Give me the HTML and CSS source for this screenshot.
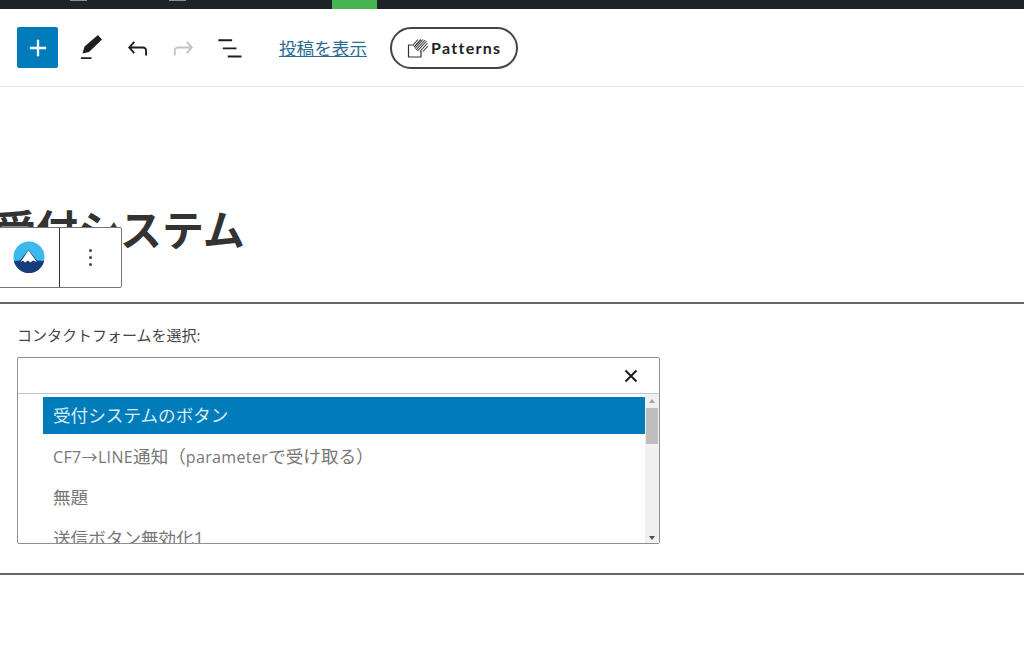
FILE: index.html
```html
<!DOCTYPE html>
<html lang="ja">
<head>
<meta charset="utf-8">
<title>受付システム</title>
<link rel="stylesheet" href="styles.css">
</head>
<body>
<div class="adminbar">
  <span class="mark mark-a"></span>
  <span class="mark mark-b"></span>
  <span class="green"></span>
</div>
<header class="toolbar">
  <button class="add" aria-label="add"><svg width="28" height="28" viewBox="0 0 24 24"><path d="M11 5h2v6h6v2h-6v6h-2v-6H5v-2h6z" fill="#fff"/></svg></button>
  <svg class="tool pen" width="30" height="30" viewBox="0 0 24 24"><path d="M4 19.300h8.400v1.500H4z M5.200 16.400 6.800 10.800 17.600 1.600 20.800 5.200 10.400 15.200z" fill="#1e1e1e"/></svg>
  <svg class="tool undo" width="30" height="30" viewBox="0 0 24 24"><path d="M18.300 11.700c-.6-.6-1.400-.9-2.300-.9H6.700l2.900-3.300-1.100-1-4.500 5L8.500 16.500l1.100-1-2.900-3.200H16c.5 0 .9.2 1.200.5.3.3.5.7.500 1.200v4h1.500v-4c0-.9-.4-1.700-.9-2.300z" fill="#1e1e1e"/></svg>
  <svg class="tool redo" width="30" height="30" viewBox="0 0 24 24"><path d="M15.600 6.500l-1.100 1 2.900 3.300H8c-.9 0-1.700.3-2.300.9-.6.6-1 1.400-1 2.300v4h1.500v-4c0-.5.2-.9.5-1.200.3-.3.7-.5 1.200-.5h9.200L14.500 15.500l1.100 1 4.500-5z" fill="#c4c4c4"/></svg>
  <svg class="tool list" width="30" height="30" viewBox="0 0 24 24"><path d="M3.500 5h11v1.500h-11zM7 11.500h11V13H7zM11 18h11v1.500H11z" fill="#1e1e1e"/></svg>
  <a class="view" href="#">投稿を表示</a>
  <div class="patterns">
    <svg width="24" height="24" viewBox="0 0 24 24"><path d="M8 9H2.500V21H15V15" fill="none" stroke="#333" stroke-width="1.200"/><path d="M7.500 8.500 12 3.500M8 11 15 3.500M9 12.500 17 3.500M10 14 19 4M11.500 15 20.500 5M14 15.500 21.500 7M17 15.500 22 10" stroke="#333" stroke-width="1.100" fill="none"/></svg>
    <span>Patterns</span>
  </div>
</header>
<main class="content">
  <h1 class="title">受付システム</h1>
  <div class="blocktools">
    <div class="bt-icon">
      <svg width="32" height="32" viewBox="0 0 32 32">
        <circle cx="16" cy="16" r="15.500" fill="#3bb9ef"/>
        <path d="M.9 20 7 19.500 15.500 9 24 19.500 31.100 20A15.500 15.500 0 0 1 .9 20z" fill="#173c7c"/>
        <path d="M15.500 9.500 24 21 20 19.500 17.500 21.500 15 19.500 12 21.500 10 19.500 7.500 21z" fill="#fff"/>
      </svg>
    </div>
    <div class="bt-more"><i></i><i></i><i></i></div>
  </div>
  <section class="block">
    <label class="label">コンタクトフォームを選択:</label>
    <div class="combo">
      <div class="combo-input"><svg width="24" height="24" viewBox="0 0 24 24"><path d="M6.500 6.500l11 11M17.500 6.500l-11 11" stroke="#1e1e1e" stroke-width="2" fill="none"/></svg></div>
      <div class="combo-body">
        <ul class="options">
          <li class="selected">受付システムのボタン</li>
          <li><span class="latin">CF7→LINE</span>通知（<span class="latin">parameter</span>で受け取る）</li>
          <li>無題</li>
          <li>送信ボタン無効化1</li>
        </ul>
        <div class="scrollbar">
          <span class="arrow up"></span>
          <span class="thumb"></span>
          <span class="arrow down"></span>
        </div>
      </div>
    </div>
  </section>
</main>
</body>
</html>
```
FILE: styles.css
```css
* { box-sizing: border-box; }
html, body { margin: 0; padding: 0; height: 100%; overflow: hidden; background: #fff; }
body { font-family: "Open Sans", "Noto Sans CJK JP", sans-serif; color: #1e1e1e; }

.adminbar { position: relative; height: 9px; background: #1d2327; }
.green { position: absolute; left: 332px; top: 0; width: 45px; height: 9px; background: #46b450; }
.mark { position: absolute; top: 0; height: 1px; width: 17px; background: #8c8f94; }
.mark-a { left: 70px; }
.mark-b { left: 169px; }

.toolbar { display: flex; align-items: center; height: 78px; padding-left: 17px; border-bottom: 1px solid #e8e8e8; }
.add { display: flex; align-items: center; justify-content: center; width: 41px; height: 41px; padding: 0; border: 0; border-radius: 2px; background: #007cba; }
.tool { flex: none; }
.pen { margin-left: 18px; }
.undo { margin-left: 17px; }
.redo { margin-left: 15px; }
.list { margin-left: 16px; }
.view { margin-left: 35px; font-size: 17.600px; color: #2b6c94; text-decoration: underline; white-space: nowrap; }
.patterns { display: flex; align-items: center; gap: 1px; width: 128px; height: 42px; margin-left: 23px; padding-left: 14px; border: 2px solid #444; border-radius: 21px; }
.patterns span { font-family: "Lato", sans-serif; font-size: 16px; font-weight: 700; letter-spacing: 1.300px; color: #222; }

.content { position: relative; }
.title { height: 217px; margin: 0; padding-top: 118px; font-size: 42px; line-height: 50px; font-weight: 700; color: #333; white-space: nowrap; text-indent: -6px; border-bottom: 2px solid #666; }

.blocktools { position: absolute; left: -3px; top: 140px; display: flex; height: 61px; background: #fff; border: 1px solid #767676; border-radius: 2px; }
.bt-icon { display: flex; align-items: center; justify-content: center; width: 62px; padding-bottom: 2px; border-right: 1px solid #333; }
.bt-more { display: flex; flex-direction: column; align-items: center; justify-content: center; gap: 4px; width: 61px; padding-bottom: 1px; }
.bt-more i { width: 3px; height: 3px; border-radius: 50%; background: #444; }

.block { height: 271px; padding: 21px 364px 0 17px; border-bottom: 2px solid #666; }
.label { display: block; font-size: 15px; line-height: 20px; color: #444; }
.combo { margin-top: 12px; height: 187px; border: 1px solid #8c8f94; border-radius: 2px; overflow: hidden; }
.combo-input { display: flex; align-items: center; justify-content: flex-end; height: 36px; padding-right: 16px; border-bottom: 1px solid #c3c4c7; }
.combo-body { display: flex; height: 150px; overflow: hidden; }
.options { flex: 1; margin: 3px 0 0 25px; padding: 0; list-style: none; font-size: 17.600px; color: #777; }
.options li { height: 37px; margin-bottom: 4px; padding-left: 10px; line-height: 37px; white-space: nowrap; }
.options .selected { background: #007cba; color: #d9ecf6; }
.latin { font-size: 16px; letter-spacing: .35px; }
.scrollbar { position: relative; flex: none; width: 14px; background: #f0f0f0; }
.thumb { position: absolute; left: 1px; top: 14px; width: 12px; height: 36px; background: #bdbdbd; }
.arrow { position: absolute; left: 4px; width: 0; height: 0; border-left: 3px solid transparent; border-right: 3px solid transparent; }
.arrow.up { top: 5px; border-bottom: 4px solid #a3a3a3; }
.arrow.down { bottom: 4px; border-top: 4px solid #505050; }
```
